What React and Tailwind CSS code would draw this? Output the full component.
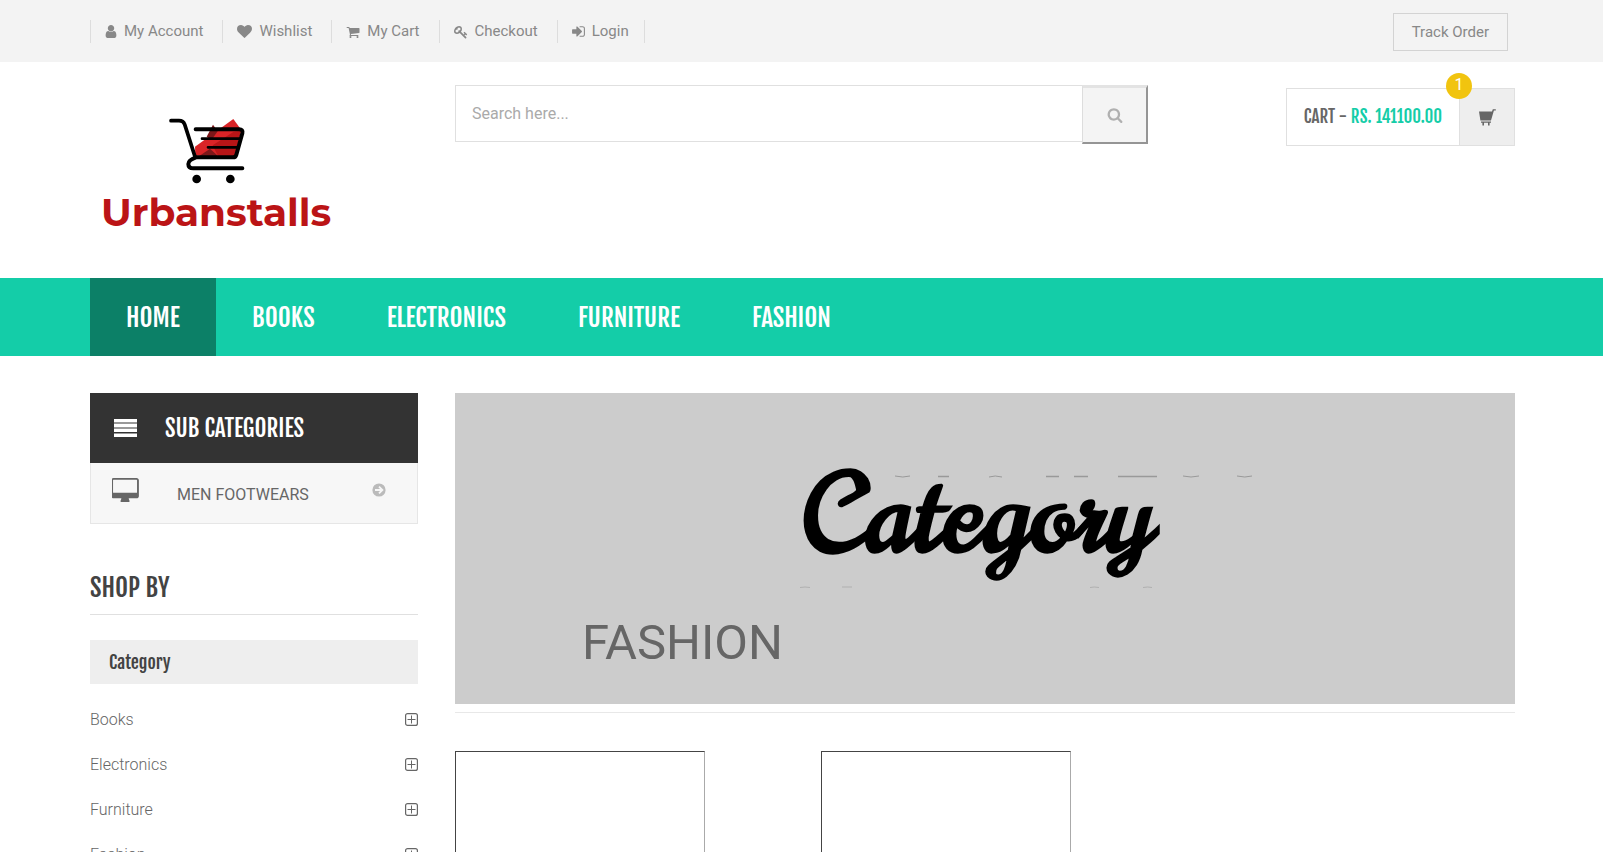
const display = "font-['Fjalla_One','Roboto_Condensed','Liberation_Sans_Narrow',sans-serif]";

const ICONS = {
  user: ["192 0 1408 1792", "M1536 1399q0 109-62.5 187t-150.5 78h-854q-88 0-150.5-78t-62.5-187q0-85 8.5-160.5t31.5-152 58.5-131 94-89 134.5-34.5q131 128 313 128t313-128q76 0 134.5 34.5t94 89 58.5 131 31.5 152 8.5 160.5zm-256-887q0 159-112.5 271.5t-271.5 112.5-271.5-112.5-112.5-271.5 112.5-271.5 271.5-112.5 271.5 112.5 112.5 271.5z"],
  heart: ["0 0 1792 1792", "M896 1664q-26 0-44-18l-624-602q-10-8-27.5-26t-55.5-65.5-68-97.5-53.5-121-23.5-138q0-220 127-344t351-124q62 0 126.5 21.5t120 58 95.5 68.5 76 68q36-36 76-68t95.5-68.5 120-58 126.5-21.5q224 0 351 124t127 344q0 221-229 450l-623 600q-18 18-44 18z"],
  cart: ["0 0 1792 1792", "M704 1536q0 52-38 90t-90 38-90-38-38-90 38-90 90-38 90 38 38 90zm896 0q0 52-38 90t-90 38-90-38-38-90 38-90 90-38 90 38 38 90zm128-1088v512q0 24-16.5 42.5t-40.5 21.5l-1044 122q13 60 13 70 0 16-24 64h920q26 0 45 19t19 45-19 45-45 19h-1024q-26 0-45-19t-19-45q0-11 8-31.5t16-36 21.5-40 15.5-29.5l-177-823h-204q-26 0-45-19t-19-45 19-45 45-19h256q16 0 28.5 6.5t19.5 15.5 13 24.5 8 26 5.5 29.5 4.5 26h1201q26 0 45 19t19 45z"],
  key: ["0 0 1792 1792", "M832 512q0-80-56-136t-136-56-136 56-56 136q0 42 19 83-41-19-83-19-80 0-136 56t-56 136 56 136 136 56 136-56 56-136q0-42-19-83 41 19 83 19 80 0 136-56t56-136zm851 704q0 17-49 66t-66 49q-9 0-28.5-16t-36.5-33-38.5-40-24.5-26l-96 96 220 220q28 28 28 68 0 42-39 81t-81 39q-40 0-68-28l-671-671q-176 131-365 131-163 0-265.5-102.5t-102.5-265.5q0-160 95-313t248-248 313-95q163 0 265.5 102.5t102.5 265.5q0 189-131 365l355 355 96-96q-3-3-26-24.5t-40-38.5-33-36.5-16-28.5q0-17 49-66t66-49q13 0 23 10 6 6 46 44.5t82 79.5 86.5 86 73 78 28.5 41z"],
  login: ["128 0 1536 1792", "M1312 896q0 26-19 45l-544 544q-19 19-45 19t-45-19-19-45v-288h-448q-26 0-45-19t-19-45v-384q0-26 19-45t45-19h448v-288q0-26 19-45t45-19 45 19l544 544q19 19 19 45zm352-352v704q0 119-84.5 203.5t-203.5 84.5h-320q-13 0-22.5-9.5t-9.5-22.5q0-4-1-20t-.5-26.5 3-23.5 10-19.5 20.5-6.5h320q66 0 113-47t47-113v-704q0-66-47-113t-113-47h-312l-11.5-1-11.5-3-8-5.5-7-9-2-13.5q0-4-1-20t-.5-26.5 3-23.5 10-19.5 20.5-6.5h320q119 0 203.5 84.5t84.5 203.5z"],
  search: ["0 0 1792 1792", "M1216 832q0-185-131.5-316.5t-316.5-131.5-316.5 131.5-131.5 316.5 131.5 316.5 316.5 131.5 316.5-131.5 131.5-316.5zm512 832q0 52-38 90t-90 38q-54 0-90-38l-343-342q-179 124-399 124-143 0-273.5-55.5t-225-150-150-225-55.5-273.5 55.5-273.5 150-225 225-150 273.5-55.5 273.5 55.5 225 150 150 225 55.5 273.5q0 220-124 399l343 343q37 37 37 90z"],
  desktop: ["0 0 1856 1664", "M1728 992v-832q0-13-9.5-22.5t-22.5-9.5h-1600q-13 0-22.5 9.5t-9.5 22.5v832q0 13 9.5 22.5t22.5 9.5h1600q13 0 22.5-9.5t9.5-22.5zm128-832v1088q0 66-47 113t-113 47h-544q0 37 16 77.5t32 71 16 43.5q0 26-19 45t-45 19h-512q-26 0-45-19t-19-45q0-14 16-44t32-70 16-78h-544q-66 0-113-47t-47-113v-1088q0-66 47-113t113-47h1600q66 0 113 47t47 113z"],
};

function Icon({ name, className }) {
  const [box, path] = ICONS[name];
  return (
    <svg viewBox={box} className={className} fill="currentColor" aria-hidden="true">
      <path d={path} />
    </svg>
  );
}

function Logo() {
  return (
    <a href="#" className="flex flex-col items-start pt-[53px] pl-[11px]">
      <svg viewBox="255 75 249 216" className="ml-[64px] h-[72px] w-[83px]" fill="none" strokeLinecap="round" strokeLinejoin="round" aria-hidden="true">
        <path d="M345 170 460 87l22 30-18 80H346z" fill="#d92427" />
        <path d="M380 140l19-36 14 20-17 24z" fill="#7c1719" />
        <path d="M398 166l62-40 24-4-20 76h-50z" fill="#b81517" />
        <path d="M358 198l32-22 24 22z" fill="#7c1719" />
        <g stroke="#000">
          <path d="M273 92h24q13 0 17 11l31 97" strokeWidth="11" />
          <path d="M347 118h130q13 0 10 12l-18 64q-2 8-10 8H348q-23 8-23 20 0 13 15 13h147" strokeWidth="12" />
          <path d="M366 146h113M384 172h88" strokeWidth="8" />
        </g>
        <g fill="#000">
          <circle cx="350" cy="267" r="13" />
          <circle cx="451" cy="267" r="13" />
        </g>
      </svg>
      <span className="font-['Montserrat','Inter',sans-serif] text-[39px] leading-[50px] font-bold text-[#bb1416]">Urbanstalls</span>
    </a>
  );
}

const topLinks = [
  ["user", "My Account", "h-[15px] w-[12px]"],
  ["heart", "Wishlist", "size-[15px]"],
  ["cart", "My Cart", "size-[14px]"],
  ["key", "Checkout", "size-[14px]"],
  ["login", "Login", "h-[15px] w-[13px]"],
];
const navLinks = ["HOME", "BOOKS", "ELECTRONICS", "FURNITURE", "FASHION"];
const shopLinks = ["Books", "Electronics", "Furniture", "Fashion"];
const shell = "mx-auto max-w-[1603px] pl-[90px] pr-[88px]";

export default function App() {
  return (
    <div className="bg-white font-['Roboto',sans-serif] text-[#666]">
      <div className="bg-[#f3f3f3]">
        <div className={`${shell} flex h-[62px] items-start justify-between`}>
          <ul className="mt-[20px] flex border-r border-[#ddd] text-[15px] leading-[23px] text-[#888]">
            {topLinks.map(([icon, label, size]) => (
              <li key={label} className="border-l border-[#ddd] pr-[19px] pl-[14px] last:pr-[15px]">
                <a href="#" className="flex items-center gap-[7px]">
                  <Icon name={icon} className={size} />
                  {label}
                </a>
              </li>
            ))}
          </ul>
          <a href="#" className="mt-[13px] mr-[7px] border border-[#d3d3d3] px-[18px] py-[7px] text-[15px] leading-[22px] text-[#888]">Track Order</a>
        </div>
      </div>

      <header className={`${shell} flex h-[216px]`}>
        <div className="w-[365px] shrink-0">
          <Logo />
        </div>
        <form className="mt-[23px] flex h-[59px] min-w-0 flex-1 items-start">
          <input
            type="text"
            aria-label="Search"
            placeholder="Search here..."
            className="h-[57px] min-w-0 flex-1 border border-r-0 border-[#e0e0e0] px-[16px] text-[16px] outline-none placeholder:text-[#aaa]"
          />
          <button type="button" aria-label="Search" className="flex h-[59px] w-[66px] items-center justify-center border-t-3 border-r-2 border-b-2 border-l border-t-[#e3e3e3] border-r-[#959595] border-b-[#959595] border-l-[#ddd] bg-[#f4f4f4] text-[#b0b0b0]">
            <Icon name="search" className="size-[16px]" />
          </button>
        </form>
        <a href="#" className="relative mt-[26px] ml-[138px] flex h-[58px] w-[229px] shrink-0 border border-[#e0e0e0]">
          <span className={`${display} flex flex-1 items-center justify-center gap-1 text-[17px] whitespace-nowrap`}>
            CART - <span className="text-[#14cda8]">RS. 141100.00</span>
          </span>
          <span className="flex w-[55px] items-center justify-center border-l border-[#e0e0e0] bg-[#eee]">
            <svg viewBox="0 0 17 17" className="size-[17px]" aria-hidden="true">
              <path d="M0 2.6h13L13.8.2h3v1.4h-1.9L12 11.4H1.4zM2 12.4h10v1.4H2zM3.4 13.5h1.6v2.9H3.4zM9 13.5h1.6v2.9H9z" fill="#666" />
            </svg>
          </span>
          <span className="absolute -top-[16px] right-[42px] flex size-[26px] items-center justify-center rounded-full bg-[#f1c40f] pb-[3px] text-[16px] text-white">1</span>
        </a>
      </header>

      <nav className="bg-[#14cda8]">
        <ul className={`${shell} flex`}>
          {navLinks.map((label) => (
            <li key={label} className="first:bg-[#0c8067]">
              <a href="#" className={`${display} block px-[36px] pt-[2px] text-[25px] leading-[76px] text-white`}>{label}</a>
            </li>
          ))}
        </ul>
      </nav>

      <div className={`${shell} flex gap-[37px] pt-[37px]`}>
        <aside className="w-[328px] shrink-0">
          <h2 className={`${display} flex h-[70px] items-center gap-[28px] bg-[#333] pl-[24px] text-[23px] text-white`}>
            <svg viewBox="0 0 23 18" className="h-[18px] w-[23px]" aria-hidden="true">
              <path d="M0 0h23v18H0z" fill="#999" />
              <path d="M0 0h23v3H0zM0 5h23v3H0zM0 10h23v3H0zM0 15h23v3H0z" fill="#fff" />
              <path d="M0 13h23v1H0z" fill="#333" />
            </svg>
            <span className="pt-[2px]">SUB CATEGORIES</span>
          </h2>
          <a href="#" className="flex h-[61px] items-start border border-t-0 border-[#e6e6e6] bg-[#f7f7f7] pl-[21px]">
            <Icon name="desktop" className="mt-[15px] h-[24px] w-[27px]" />
            <span className="ml-[38px] flex-1 pt-[20px] text-[16px] leading-[24px]">MEN FOOTWEARS</span>
            <svg viewBox="0 0 14 14" className="mt-[20px] mr-[31px] size-[14px]" aria-hidden="true">
              <circle cx="7" cy="7" r="6.6" fill="#bbb" />
              <path d="M3 7h7M7 3.6 10.4 7 7 10.4" fill="none" stroke="#f7f7f7" strokeWidth="1.8" />
            </svg>
          </a>

          <h2 className={`${display} mt-[44px] border-b border-[#e0e0e0] pb-[7px] text-[25px] leading-[39px] text-[#434343]`}>SHOP BY</h2>
          <h3 className={`${display} mt-[25px] bg-[#eee] px-[19px] text-[18px] leading-[44px] text-[#434343]`}>Category</h3>
          <ul className="mt-[13px] text-[16px] leading-[45px] font-light">
            {shopLinks.map((label) => (
              <li key={label}>
                <a href="#" className="flex items-center justify-between">
                  {label}
                  <svg viewBox="0 0 13 13" className="size-[13px]" fill="none" stroke="#666" aria-hidden="true">
                    <rect x="0.6" y="0.6" width="11.8" height="11.8" rx="2" strokeWidth="1.2" />
                    <path d="M6.5 2.5v8M2.5 6.5h8" />
                  </svg>
                </a>
              </li>
            ))}
          </ul>
        </aside>

        <main className="min-w-0 flex-1">
          <section className="relative h-[311px] bg-[#ccc]">
            <svg viewBox="0 0 480 114" className="absolute top-[82px] left-[335px] h-[114px] w-[480px]" stroke="#999" aria-hidden="true">
              <path d="M148 1.5h11M256 1.5h13M284 1.5h14M328 1.5h39" strokeWidth="1.4" />
              <path d="M105 1q8 2 15 0M199 2q6-2 13 0M393 1q8 2 16 0M447 1q8 2 15 0" fill="none" />
              <path d="M10 112.5q5-1 10 0M52 112h10M300 112.5q4-1 9 0M353 112.5q5-1 9 0" fill="none" stroke="#b0b0b0" />
            </svg>
            <div className="pt-[64px] pl-[346px] font-['Norican','Lobster','Liberation_Serif',serif] text-[106px] leading-[120px] font-bold text-black">Category</div>
            <h1 className="mt-[37px] pl-[127px] text-[49px] leading-[58px]">FASHION</h1>
          </section>
          <hr className="mt-[8px] border-[#e8e8e8]" />
          <div className="mt-[38px] flex gap-[116px]">
            {["first", "second"].map((slot) => (
              <div key={slot} className="h-[300px] w-[250px] border border-t-[#444] border-r-[#aaa] border-b-[#aaa] border-l-[#444]" />
            ))}
          </div>
        </main>
      </div>
    </div>
  );
}
